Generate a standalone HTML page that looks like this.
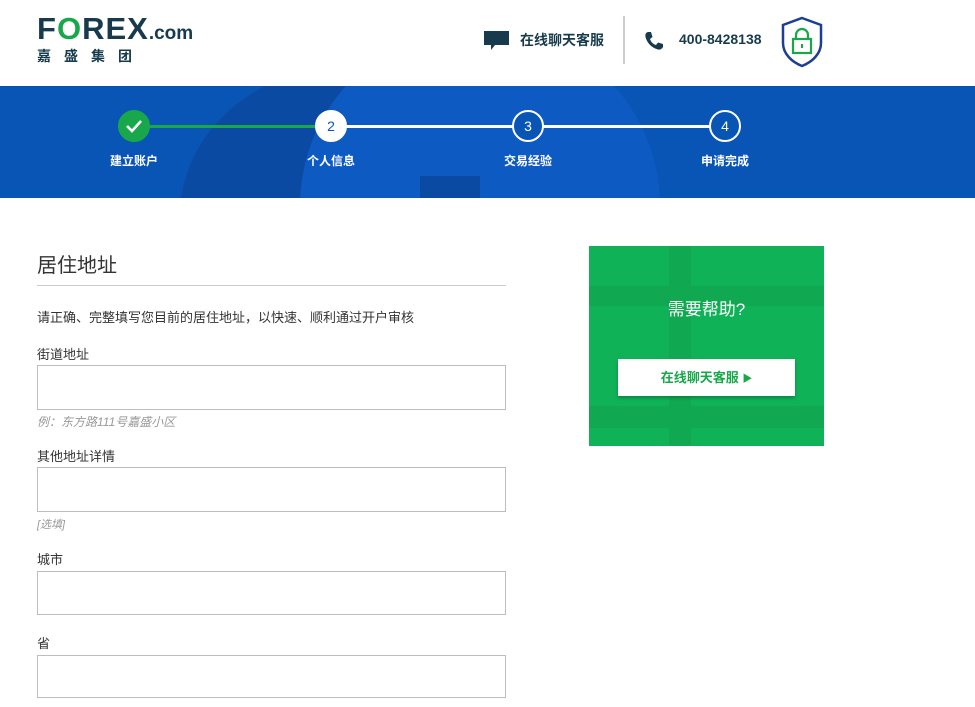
<!DOCTYPE html>
<html><head><meta charset="utf-8"><style>
*{margin:0;padding:0;box-sizing:border-box}
body{width:975px;height:707px;overflow:hidden;background:#fff;font-family:"Liberation Sans","Noto Sans CJK SC",sans-serif;position:relative;color:#333}
.a{position:absolute;white-space:nowrap}
.box{position:absolute;left:37px;width:469px;border:1px solid #bdbdbd;background:#fff}
.lbl{font-size:13px;color:#333}
.ban{position:absolute;left:0;top:86px;width:975px;height:112px;background:#0855b5;overflow:hidden}
.c{position:absolute;width:32px;height:32px;border-radius:50%;border:2px solid #fff;color:#fff;font-size:14px;text-align:center;line-height:28px;top:24px}
.st{position:absolute;top:66px;color:#fff;font-size:12px;font-weight:bold;width:80px;text-align:center}
</style></head><body>
<div class="a" style="left:37px;top:11px;font-size:31px;font-weight:bold;color:#173b4c;letter-spacing:1px">F<span style="color:#18a84b">O</span>REX<span style="font-size:19px;letter-spacing:0">.com</span></div>
<div class="a" style="left:37px;top:46px;font-size:14px;font-weight:bold;color:#173b4c;letter-spacing:13px">嘉盛集团</div>

<svg class="a" style="left:484px;top:31px" width="26" height="20" viewBox="0 0 26 20"><path d="M0 0H25V14H11L7 19V14H0Z" fill="#173b4c"/></svg>
<div class="a" style="left:520px;top:30px;font-size:14px;font-weight:bold;color:#173b4c">在线聊天客服</div>
<div class="a" style="left:623px;top:16px;width:2px;height:48px;background:#ccc"></div>
<svg class="a" style="left:644px;top:31px" width="20" height="20" viewBox="0 0 20 20"><path d="M4 1L7 1 8.5 6 6 8C7 11 9 13 12 14L14 11.5 19 13 19 16C18 18 16 19 14 18.5 8 17 3 12 1.5 6 1 3 2 1.5 4 1Z" fill="#173b4c"/></svg>
<div class="a" style="left:679px;top:31px;font-size:14px;font-weight:bold;color:#173b4c">400-8428138</div>
<svg class="a" style="left:781px;top:16px" width="42" height="52" viewBox="0 0 42 52"><path d="M21 2L40 9V27C40 38 31 46 21 50 11 46 2 38 2 27V9Z" fill="#fff" stroke="#1c3f94" stroke-width="2.5"/><path d="M15 23V19A6 6 0 0 1 27 19V23" fill="none" stroke="#18a84b" stroke-width="2.2"/><rect x="12" y="23" width="18" height="14" fill="none" stroke="#18a84b" stroke-width="2.2"/><rect x="20" y="28" width="2" height="4" fill="#18a84b"/></svg>

<div class="ban">
<div style="position:absolute;left:180px;top:-20px;width:340px;height:300px;border-radius:50%;background:#0a4aa3"></div>
<div style="position:absolute;left:300px;top:-60px;width:360px;height:360px;border-radius:50%;background:#0d5ac2"></div>
<div style="position:absolute;left:420px;top:90px;width:60px;height:30px;background:#0a4aa3"></div>
<div style="position:absolute;left:134px;top:39px;width:197px;height:3px;background:#18a84b"></div>
<div style="position:absolute;left:331px;top:39px;width:394px;height:3px;background:#fff"></div>
<div class="c" style="left:118px;background:#18a84b;border-color:#18a84b"><svg width="18" height="14" viewBox="0 0 18 14" style="margin-top:7px"><path d="M2 7L7 12 16 2" fill="none" stroke="#fff" stroke-width="2.6"/></svg></div>
<div class="c" style="left:315px;background:#fff;color:#0855b5">2</div>
<div class="c" style="left:512px;background:#0855b5">3</div>
<div class="c" style="left:709px;background:#0855b5">4</div>
<div class="st" style="left:94px">建立账户</div>
<div class="st" style="left:291px">个人信息</div>
<div class="st" style="left:488px">交易经验</div>
<div class="st" style="left:685px">申请完成</div>
</div>

<div class="a" style="left:37px;top:249px;font-size:20px;color:#333">居住地址</div>
<div class="a" style="left:37px;top:285px;width:469px;height:1px;background:#ccc"></div>
<div class="a lbl" style="left:37px;top:307px">请正确、完整填写您目前的居住地址，以快速、顺利通过开户审核</div>
<div class="a lbl" style="left:37px;top:344px">街道地址</div>
<div class="box" style="top:365px;height:45px"></div>
<div class="a" style="left:37px;top:413px;font-size:12px;color:#999;font-style:italic">例：东方路111号嘉盛小区</div>
<div class="a lbl" style="left:37px;top:446px">其他地址详情</div>
<div class="box" style="top:467px;height:45px"></div>
<div class="a" style="left:37px;top:516px;font-size:11px;color:#999;font-style:italic">[选填]</div>
<div class="a lbl" style="left:37px;top:549px">城市</div>
<div class="box" style="top:571px;height:44px"></div>
<div class="a lbl" style="left:37px;top:633px">省</div>
<div class="box" style="top:655px;height:43px"></div>

<div class="a" style="left:589px;top:246px;width:235px;height:200px;background:#0fb257;overflow:hidden">
<div style="position:absolute;left:80px;top:0;width:22px;height:200px;background:#10a851"></div>
<div style="position:absolute;left:0;top:40px;width:235px;height:20px;background:#10a851"></div>
<div style="position:absolute;left:0;top:160px;width:235px;height:22px;background:#10a851"></div>
<div class="a" style="left:0;width:235px;text-align:center;top:49px;color:#fff;font-size:17px">需要帮助?</div>
<div class="a" style="left:29px;top:113px;width:177px;height:37px;background:#fff;box-shadow:0 2px 3px rgba(0,0,0,.25);text-align:center;line-height:37px;color:#18a84b;font-size:13px;font-weight:bold">在线聊天客服 <span style="font-size:10px;color:#18a84b">▶</span></div>
</div>
</body></html>
